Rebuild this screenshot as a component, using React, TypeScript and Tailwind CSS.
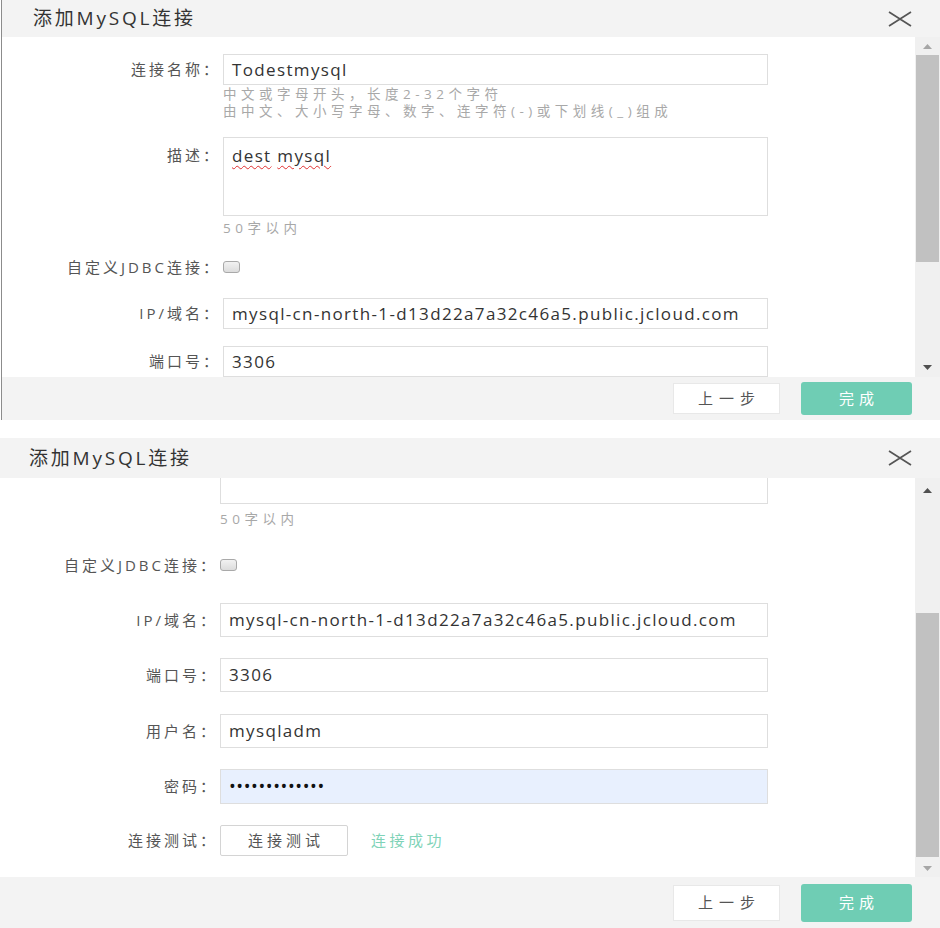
import { type ReactNode } from 'react';

const labelText = 'shrink-0 text-right text-[15px] tracking-[3px] text-[#555] whitespace-nowrap';
const inputBox = 'border border-[#dedede] flex items-center pl-[8px] whitespace-nowrap overflow-hidden';
const valueText = 'text-[17px] tracking-[1.35px] text-[#333]';
const hintText = 'text-[13.5px] tracking-[4.5px] text-[#a8a8a8] whitespace-nowrap';

interface FieldProps {
  label?: string;
  big: boolean;
  top?: boolean;
  className?: string;
  children: ReactNode;
}

const Field = ({ label, big, top, className = '', children }: FieldProps) => (
  <div className={`flex ${top ? 'items-start' : 'items-center'} ${className}`}>
    <div className={`${labelText} ${big ? 'w-[218px]' : 'w-[219px]'} ${top ? 'pt-[6px] leading-[24px]' : ''}`}>
      {label}
    </div>
    <div className="ml-[2px]">{children}</div>
  </div>
);

const Arrow = ({ up, color }: { up: boolean; color: string }) => (
  <svg width="9" height="5" viewBox="0 0 9 5">
    <path d={up ? 'M0 5 L4.5 0 L9 5 Z' : 'M0 0 L4.5 5 L9 0 Z'} fill={color} />
  </svg>
);

const Scrollbar = ({ big }: { big: boolean }) => (
  <div className="w-[25px] shrink-0 bg-[#f0f0f0] flex flex-col">
    <div className={`flex justify-center items-center ${big ? 'h-[24px]' : 'h-[18px]'}`}>
      <Arrow up color={big ? '#505050' : '#a6a6a6'} />
    </div>
    <div className="flex-1 px-[1px]">
      <div className={`w-full bg-[#c1c1c1] ${big ? 'mt-[111px] h-[244px]' : 'h-[207px]'}`} />
    </div>
    <div className={`flex justify-center items-center ${big ? 'h-[18px]' : 'h-[20px]'}`}>
      <Arrow up={false} color={big ? '#a6a6a6' : '#505050'} />
    </div>
  </div>
);

const CloseIcon = () => (
  <svg width="24" height="16" viewBox="0 0 24 16" fill="none" stroke="#555" strokeWidth="1.7">
    <path d="M1 1 L23 15 M23 1 L1 15" />
  </svg>
);

const Squiggle = ({ children }: { children: ReactNode }) => (
  <span className="underline decoration-wavy decoration-[#e03030] decoration-1 underline-offset-[3px]">{children}</span>
);

const Checkbox = () => (
  <div className="w-[17px] h-[12px] rounded-[3px] border border-[#a9a9a9] bg-[linear-gradient(#f2f2f2,#dcdcdc)]" />
);

// top dialog: form scrolled to the top, cut at the port field
const FormTop = () => (
  <div className="pt-[17px]">
    <Field label="连接名称：" big={false}>
      <div className={`${inputBox} ${valueText} w-[545px] h-[31px] bg-white`}>Todestmysql</div>
    </Field>
    <Field big={false} className="mt-[1px]">
      <div className={`${hintText} leading-[17px]`}>
        <div>中文或字母开头，长度2-32个字符</div>
        <div>由中文、大小写字母、数字、连字符(-)或下划线(_)组成</div>
      </div>
    </Field>
    <Field label="描述：" big={false} top className="mt-[17px]">
      <div className={`w-[545px] h-[79px] border border-[#dedede] bg-white pl-[8px] pt-[6px] leading-[24px] ${valueText}`}>
        <Squiggle>dest</Squiggle> <Squiggle>mysql</Squiggle>
      </div>
    </Field>
    <Field big={false} className="mt-[4px]">
      <div className={`${hintText} leading-[17px]`}>50字以内</div>
    </Field>
    <Field label="自定义JDBC连接：" big={false} className="mt-[20px] h-[20px]">
      <Checkbox />
    </Field>
    <Field label="IP/域名：" big={false} className="mt-[21px]">
      <div className={`${inputBox} ${valueText} w-[545px] h-[31px] bg-white`}>
        mysql-cn-north-1-d13d22a7a32c46a5.public.jcloud.com
      </div>
    </Field>
    <Field label="端口号：" big={false} className="mt-[17px]">
      <div className={`${inputBox} ${valueText} w-[545px] h-[31px] bg-white`}>3306</div>
    </Field>
  </div>
);

// bottom dialog: form scrolled down, textarea tail visible at the top
const FormBottom = () => (
  <div className="pb-[20px]">
    <Field big>
      <div className="w-[548px] h-[26px] border-x border-b border-[#dedede] bg-white" />
    </Field>
    <Field big className="mt-[6px]">
      <div className={`${hintText} leading-[18px]`}>50字以内</div>
    </Field>
    <Field label="自定义JDBC连接：" big className="mt-[27px] h-[20px]">
      <Checkbox />
    </Field>
    <Field label="IP/域名：" big className="mt-[28px]">
      <div className={`${inputBox} ${valueText} w-[548px] h-[34px] bg-white`}>
        mysql-cn-north-1-d13d22a7a32c46a5.public.jcloud.com
      </div>
    </Field>
    <Field label="端口号：" big className="mt-[21px]">
      <div className={`${inputBox} ${valueText} w-[548px] h-[34px] bg-white`}>3306</div>
    </Field>
    <Field label="用户名：" big className="mt-[22px]">
      <div className={`${inputBox} ${valueText} w-[548px] h-[34px] bg-white`}>mysqladm</div>
    </Field>
    <Field label="密码：" big className="mt-[21px]">
      <div className={`${inputBox} w-[548px] h-[35px] bg-[#e8f0fe] text-[18px] tracking-[0.6px] text-[#111]`}>
        •••••••••••••
      </div>
    </Field>
    <Field label="连接测试：" big className="mt-[21px]">
      <div className="flex items-center">
        <div className="w-[128px] h-[31px] border border-[#d4d4d4] rounded-[2px] bg-white flex items-center justify-center pl-[4px] text-[15px] tracking-[4px] text-[#555]">
          连接测试
        </div>
        <div className="ml-[23px] text-[15px] tracking-[3.5px] text-[#7fd3b8]">连接成功</div>
      </div>
    </Field>
  </div>
);

const Dialog = ({ big }: { big: boolean }) => (
  <div className={big ? 'flex flex-col' : 'flex flex-col border-l border-[#8c8c8c] ml-[1px]'}>
    <div
      className={`flex items-center justify-between bg-[#f3f3f3] ${
        big ? 'h-[40px] pl-[29px] pr-[28px]' : 'h-[37px] pl-[31px] pr-[28px]'
      }`}
    >
      <span className="text-[19px] tracking-[2.8px] text-[#333]">添加MySQL连接</span>
      <CloseIcon />
    </div>
    <div className="flex bg-white">
      <div className={`flex-1 overflow-hidden ${big ? 'h-[399px]' : 'h-[340px]'}`}>
        {big ? <FormBottom /> : <FormTop />}
      </div>
      <Scrollbar big={big} />
    </div>
    <div className={`flex items-center justify-end gap-[21px] bg-[#f3f3f3] pr-[28px] ${big ? 'h-[51px]' : 'h-[43px]'}`}>
      <button
        className={`w-[107px] bg-white border border-[#e8e8e8] pl-[6px] text-[15px] tracking-[6px] text-[#555] ${
          big ? 'h-[36px]' : 'h-[31px]'
        }`}
      >
        上一步
      </button>
      <button
        className={`w-[111px] rounded-[3px] bg-[#6fcdb4] pl-[5px] text-[15px] tracking-[5px] text-white ${
          big ? 'h-[38px]' : 'h-[33px]'
        }`}
      >
        完成
      </button>
    </div>
  </div>
);

export default function App() {
  return (
    <div className="w-[940px] h-[928px] overflow-hidden bg-white font-['Open_Sans','Noto_Sans_CJK_SC',sans-serif]">
      <Dialog big={false} />
      <div className="h-[18px]" />
      <Dialog big />
    </div>
  );
}
